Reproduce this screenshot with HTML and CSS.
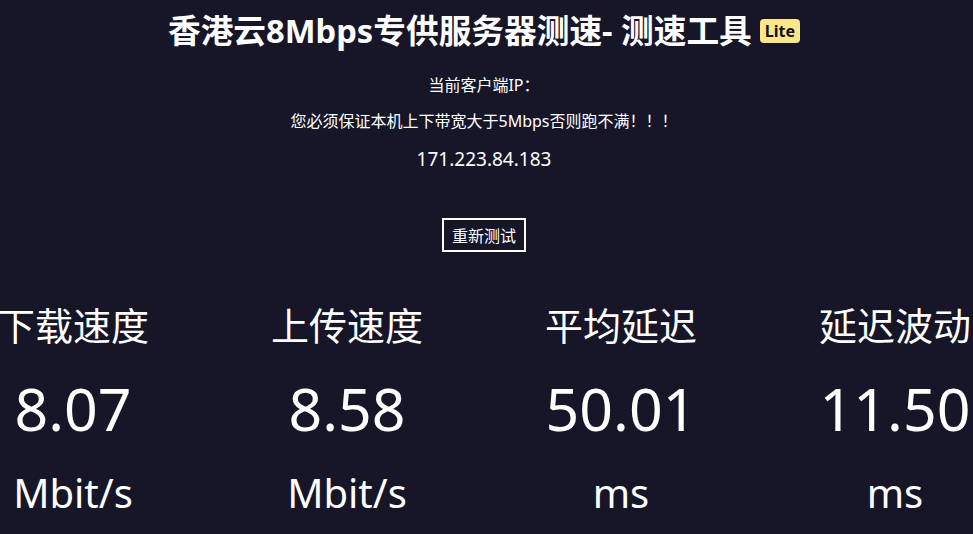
FILE: index.html
```html
<!DOCTYPE html>
<html lang="zh-CN">
<head>
<meta charset="utf-8">
<title>测速工具</title>
<link rel="stylesheet" href="styles.css">
</head>
<body>
<main class="page">
  <h1 class="title">香港云8Mbps专供服务器测速- 测速工具<span class="badge">Lite</span></h1>
  <p class="info">当前客户端IP：</p>
  <p class="info">您必须保证本机上下带宽大于5Mbps否则跑不满！！！</p>
  <p class="ip">171.223.84.183</p>
  <div class="actions"><button class="btn">重新测试</button></div>
  <section class="stats">
    <div class="stat"><div class="label">下载速度</div><div class="value">8.07</div><div class="unit">Mbit/s</div></div>
    <div class="stat"><div class="label">上传速度</div><div class="value">8.58</div><div class="unit">Mbit/s</div></div>
    <div class="stat"><div class="label">平均延迟</div><div class="value">50.01</div><div class="unit">ms</div></div>
    <div class="stat"><div class="label">延迟波动</div><div class="value">11.50</div><div class="unit">ms</div></div>
  </section>
</main>
</body>
</html>
```
FILE: styles.css
```css
html, body {
  margin: 0;
  padding: 0;
  background: #161628;
  color: #ffffff;
  overflow: hidden;
}
body {
  font-family: "Noto Sans", "Noto Sans CJK SC", sans-serif;
}
.page {
  display: flex;
  flex-direction: column;
  align-items: center;
  text-align: center;
  padding-right: 5px;
}
.title {
  margin: 11px 0 0;
  font-size: 32.7px;
  line-height: 40px;
  font-weight: 700;
  display: flex;
  align-items: center;
  gap: 8px;
}
.badge {
  display: inline-block;
  background: #fde68a;
  color: #111111;
  font-size: 16px;
  line-height: 24px;
  padding: 0 5px;
  border-radius: 4px;
  font-weight: 700;
}
.info {
  margin: 0;
  font-size: 16px;
  line-height: 20px;
}
.info:first-of-type {
  margin-top: 24px;
}
.info + .info {
  margin-top: 16px;
}
.ip {
  margin: 16px 0 0;
  font-size: 19px;
  line-height: 24px;
}
.actions {
  margin-top: 47px;
}
.btn {
  background: transparent;
  color: #ffffff;
  border: 2px solid #ffffff;
  font-family: "Noto Sans CJK SC", sans-serif;
  font-size: 16px;
  line-height: 22px;
  padding: 4px 0;
  width: 84px;
}
.stats {
  display: flex;
  justify-content: center;
  width: 100%;
  margin-top: 48px;
}
.stat {
  flex: 0 0 274px;
  display: flex;
  flex-direction: column;
  align-items: center;
}
.label {
  font-size: 38px;
  line-height: 50px;
}
.value {
  font-size: 59px;
  line-height: 80px;
  margin-top: 18px;
}
.unit {
  font-size: 40px;
  line-height: 56px;
  margin-top: 17px;
}
```
